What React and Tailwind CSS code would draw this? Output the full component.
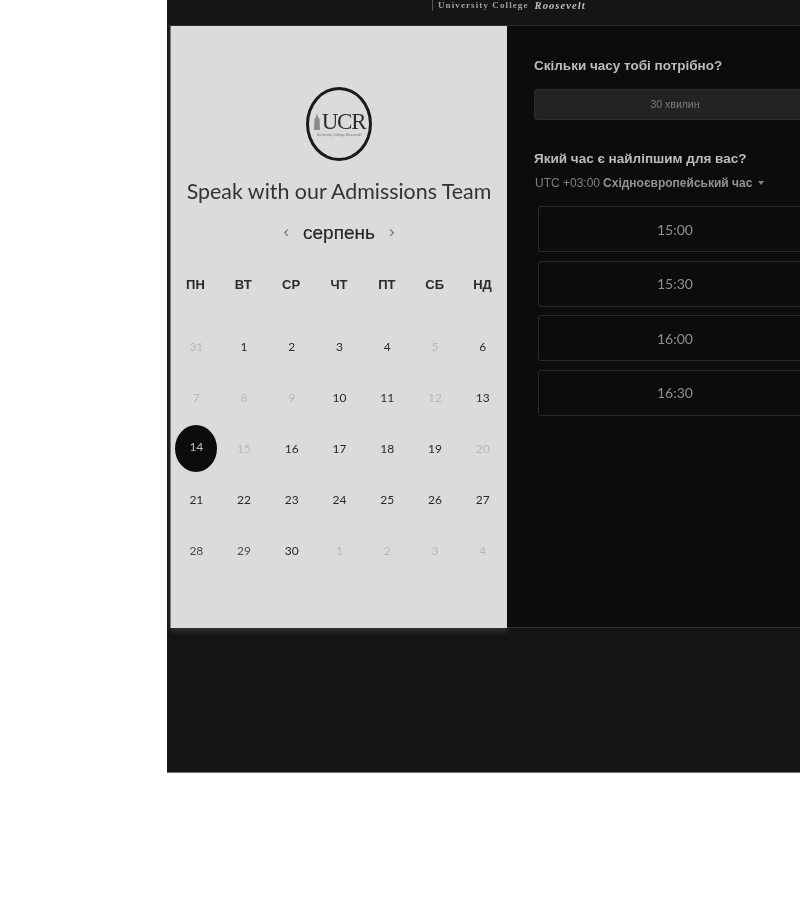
const weekdays = ['ПН','ВТ','СР','ЧТ','ПТ','СБ','НД'];
const dates = [
  ['31',0],['1',1],['2',1],['3',1],['4',1],['5',0],['6',1],
  ['7',0],['8',0],['9',0],['10',1],['11',1],['12',0],['13',1],
  ['14',2],['15',0],['16',1],['17',1],['18',1],['19',1],['20',0],
  ['21',1],['22',1],['23',1],['24',1],['25',1],['26',1],['27',1],
  ['28',3],['29',3],['30',1],['1',0],['2',0],['3',0],['4',0],
];
const slots = ['15:00','15:30','16:00','16:30'];
const sans = "font-['Liberation_Sans',Arial,sans-serif]";

function Logo() {
  return (
    <div className="w-[66px] h-[74px] rounded-[50%] border-[3px] border-[#1a1a1a] flex flex-col items-center justify-center">
      <div className="flex items-end text-[#2d2d2d] leading-none">
        <svg width="8" height="17" viewBox="0 0 8 17" className="mb-[3px] mr-[1px]">
          <path d="M4 0 L5 4 L6.5 6 L7 17 L1 17 L1.5 6 L3 4 Z" fill="#8a8a8a" />
        </svg>
        <span className="font-['Liberation_Serif',serif] text-[23px] tracking-[-1.2px] leading-[23px]">UCR</span>
      </div>
      <span className={`${sans} text-[3.5px] leading-[5px] text-[#777] whitespace-nowrap`}>University College Roosevelt</span>
    </div>
  );
}

function DateCell({ label, kind }) {
  if (kind === 2) {
    return (
      <div className="h-[51px] flex items-center justify-center">
        <div className="w-[42px] h-[47px] rounded-[50%] bg-[#0c0c0c] text-[#bdbdbd] flex items-center justify-center pb-[3px]">{label}</div>
      </div>
    );
  }
  const color = kind === 1 ? 'text-[#2a2a2a]' : kind === 3 ? 'text-[#4a4a4a]' : 'text-[#b8b8b8]';
  return <div className={`h-[51px] flex items-center justify-center ${color}`}>{label}</div>;
}

export default function App() {
  return (
    <div className="w-[800px] h-[900px] bg-white overflow-hidden pl-[167px] blur-[0.5px]">
      <div className="w-[700px] h-[773px] bg-[#151515] border-b border-[#777]">
        <div className="h-[26px] border-b border-[#2c2c2c] flex items-start pl-[265px]">
          <div className="h-[11px] border-l border-[#555] pl-[5px] flex items-center whitespace-nowrap text-[#a0a0a0] font-bold tracking-[1.1px] text-[9px] font-['Liberation_Serif',serif]">
            <span>University College</span>
            <span className="italic text-[#c0c0c0] ml-[6px] text-[10.5px]">Roosevelt</span>
          </div>
        </div>
        <div className="flex h-[602px] pl-[3px]">
          <div className="w-[337px] bg-[#dbdbdb] flex flex-col items-center pt-[61px] border-l border-[#777] shadow-[0_3px_6px_rgba(255,255,255,0.14)]">
            <Logo />
            <h1 className="font-['Lato',sans-serif] font-normal text-[21.4px] leading-[30px] mt-[15px] text-[#333] whitespace-nowrap">Speak with our Admissions Team</h1>
            <div className={`${sans} flex items-center mt-[12px] h-[30px] text-[#262626]`}>
              <span className="text-[#777] text-[17px] leading-none pb-[4px]">‹</span>
              <span className="text-[19px] mx-[14px] [-webkit-text-stroke:0.2px_#262626]">серпень</span>
              <span className="text-[#777] text-[17px] leading-none pb-[4px]">›</span>
            </div>
            <div className={`${sans} grid grid-cols-7 w-[335px] mt-[19px] font-bold text-[13px] text-[#2a2a2a] text-center`}>
              {weekdays.map((d) => <div key={d} className="h-[36px] leading-[36px]">{d}</div>)}
            </div>
            <div className="grid grid-cols-7 w-[335px] mt-[18px] pl-[1px] font-['Lato',sans-serif] text-[12px] font-normal">
              {dates.map(([label, kind], i) => <DateCell key={i} label={label} kind={kind} />)}
            </div>
          </div>
          <div className={`${sans} w-[336px] bg-[#0c0c0c] border-b border-[#333] px-[27px] pt-[30px]`}>
            <h2 className="text-[13.5px] leading-[20px] font-bold text-[#bcbcbc]">Скільки часу тобі потрібно?</h2>
            <div className="mt-[13px] w-[282px] h-[31px] rounded-[3px] bg-[#232323] border border-[#2c2c2c] flex items-center justify-center text-[#7c7c7c] text-[10.5px]">30 хвилин</div>
            <h2 className="mt-[29px] text-[13.5px] leading-[20px] font-bold text-[#bcbcbc]">Який час є найліпшим для вас?</h2>
            <div className="mt-[4px] ml-[1px] flex items-center text-[12px] leading-[20px] text-[#808080]">
              <span>UTC +03:00</span>
              <span className="ml-[3px] font-bold text-[#929292]">Східноєвропейський час</span>
              <span className="ml-[6px] w-0 h-0 border-x-[3.5px] border-x-transparent border-t-[4px] border-t-[#808080]" />
            </div>
            <div className="mt-[13px] ml-[4px] flex flex-col gap-[8.6px] w-[274px]">
              {slots.map((s) => (
                <div key={s} className="h-[46px] rounded-[3px] border border-[#2a2a2a] flex items-center justify-center text-[#8e8e8e] text-[14px] font-['Lato',sans-serif]">{s}</div>
              ))}
            </div>
          </div>
        </div>
      </div>
    </div>
  );
}
